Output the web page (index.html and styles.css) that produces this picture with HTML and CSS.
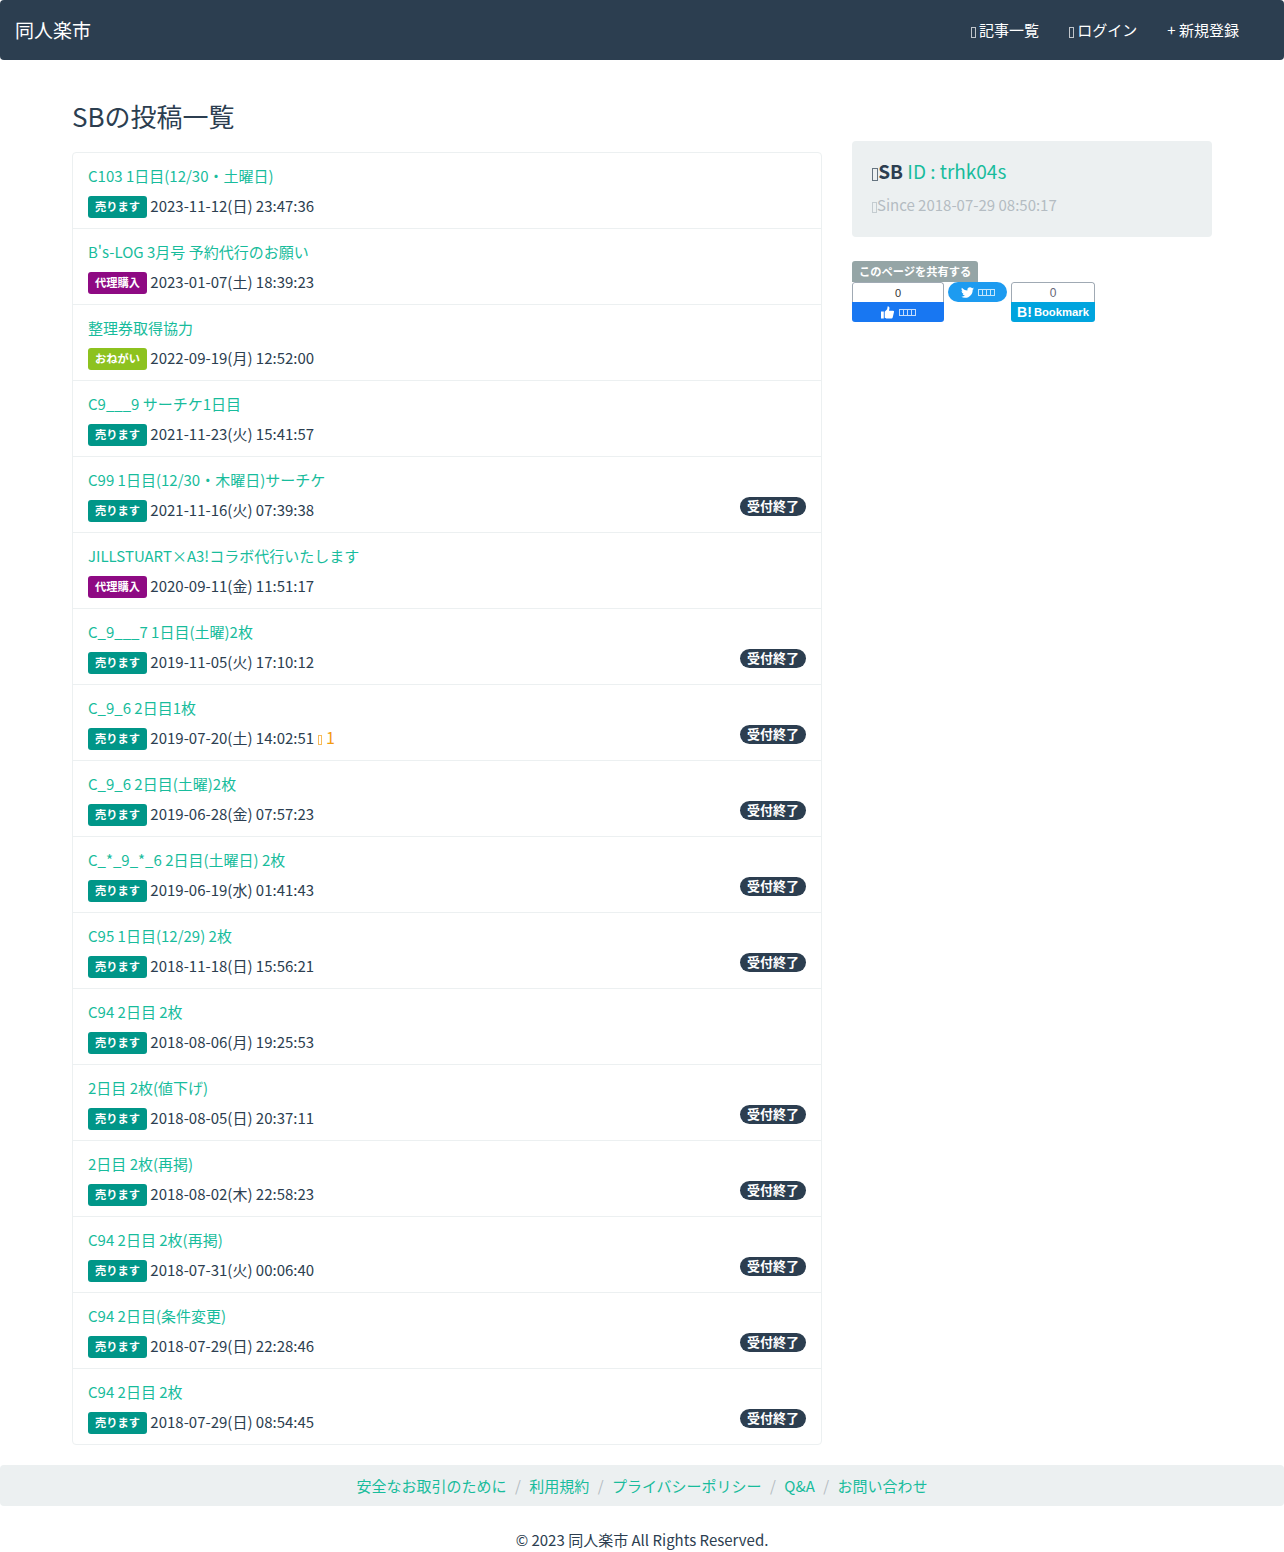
FILE: index.html
```html
<!DOCTYPE html>
<html lang="ja">
<head>
<meta charset="utf-8">
<title>SBの投稿一覧 - 同人楽市</title>
<link rel="stylesheet" href="styles.css">
</head>
<body>
<nav class="navbar">
  <a class="brand" href="#">同人楽市</a>
  <ul class="nav-links">
    <li><a href="#"><i class="tofu"></i> 記事一覧</a></li>
    <li><a href="#"><i class="tofu"></i> ログイン</a></li>
    <li><a href="#">+ 新規登録</a></li>
  </ul>
</nav>
<div class="container">
  <main class="main-col">
    <h3 class="page-title">SBの投稿一覧</h3>
    <div class="list">
      <div class="item"><a class="item-title" href="#">C103 1日目(12/30・土曜日)</a><div class="meta"><div><span class="tag sell">売ります</span> 2023-11-12(日) 23:47:36</div></div></div>
      <div class="item"><a class="item-title" href="#">B's-LOG 3月号 予約代行のお願い</a><div class="meta"><div><span class="tag proxy">代理購入</span> 2023-01-07(土) 18:39:23</div></div></div>
      <div class="item"><a class="item-title" href="#">整理券取得協力</a><div class="meta"><div><span class="tag ask">おねがい</span> 2022-09-19(月) 12:52:00</div></div></div>
      <div class="item"><a class="item-title" href="#">C9___9 サーチケ1日目</a><div class="meta"><div><span class="tag sell">売ります</span> 2021-11-23(火) 15:41:57</div></div></div>
      <div class="item"><a class="item-title" href="#">C99 1日目(12/30・木曜日)サーチケ</a><div class="meta"><div><span class="tag sell">売ります</span> 2021-11-16(火) 07:39:38</div><span class="closed">受付終了</span></div></div>
      <div class="item"><a class="item-title" href="#">JILLSTUART×A3!コラボ代行いたします</a><div class="meta"><div><span class="tag proxy">代理購入</span> 2020-09-11(金) 11:51:17</div></div></div>
      <div class="item"><a class="item-title" href="#">C_9___7 1日目(土曜)2枚</a><div class="meta"><div><span class="tag sell">売ります</span> 2019-11-05(火) 17:10:12</div><span class="closed">受付終了</span></div></div>
      <div class="item"><a class="item-title" href="#">C_9_6 2日目1枚</a><div class="meta"><div><span class="tag sell">売ります</span> 2019-07-20(土) 14:02:51 <span class="comments"><i class="tofu"></i> 1</span></div><span class="closed">受付終了</span></div></div>
      <div class="item"><a class="item-title" href="#">C_9_6 2日目(土曜)2枚</a><div class="meta"><div><span class="tag sell">売ります</span> 2019-06-28(金) 07:57:23</div><span class="closed">受付終了</span></div></div>
      <div class="item"><a class="item-title" href="#">C_*_9_*_6 2日目(土曜日) 2枚</a><div class="meta"><div><span class="tag sell">売ります</span> 2019-06-19(水) 01:41:43</div><span class="closed">受付終了</span></div></div>
      <div class="item"><a class="item-title" href="#">C95 1日目(12/29) 2枚</a><div class="meta"><div><span class="tag sell">売ります</span> 2018-11-18(日) 15:56:21</div><span class="closed">受付終了</span></div></div>
      <div class="item"><a class="item-title" href="#">C94 2日目 2枚</a><div class="meta"><div><span class="tag sell">売ります</span> 2018-08-06(月) 19:25:53</div></div></div>
      <div class="item"><a class="item-title" href="#">2日目 2枚(値下げ)</a><div class="meta"><div><span class="tag sell">売ります</span> 2018-08-05(日) 20:37:11</div><span class="closed">受付終了</span></div></div>
      <div class="item"><a class="item-title" href="#">2日目 2枚(再掲)</a><div class="meta"><div><span class="tag sell">売ります</span> 2018-08-02(木) 22:58:23</div><span class="closed">受付終了</span></div></div>
      <div class="item"><a class="item-title" href="#">C94 2日目 2枚(再掲)</a><div class="meta"><div><span class="tag sell">売ります</span> 2018-07-31(火) 00:06:40</div><span class="closed">受付終了</span></div></div>
      <div class="item"><a class="item-title" href="#">C94 2日目(条件変更)</a><div class="meta"><div><span class="tag sell">売ります</span> 2018-07-29(日) 22:28:46</div><span class="closed">受付終了</span></div></div>
      <div class="item"><a class="item-title" href="#">C94 2日目 2枚</a><div class="meta"><div><span class="tag sell">売ります</span> 2018-07-29(日) 08:54:45</div><span class="closed">受付終了</span></div></div>
    </div>
  </main>
  <aside class="side-col">
    <div class="well">
      <div class="profile-name"><i class="tofu"></i><strong>SB</strong> <a href="#">ID : trhk04s</a></div>
      <div class="since"><i class="tofu"></i>Since 2018-07-29 08:50:17</div>
    </div>
    <div class="share">
      <div class="share-label">このページを共有する</div>
      <div class="share-buttons">
        <a class="fb" href="#">
          <span class="count">0</span>
          <span class="fb-action">
            <svg class="thumb" viewBox="0 0 14 14" width="13" height="13"><path fill="#fff" d="M0 6h3v7.500H0zM4 6.200 6.600 3.400 7.200 0.400c1.500 0 2.200 1.200 1.800 2.700L8.600 5H13c.8 0 1.200.8 1 1.500l-1.400 6c-.2.600-.6 1-1.200 1H5.500C4.600 13.500 4 13 4 12.200z"/></svg>
            <span class="mini-tofu"><i></i><i></i><i></i><i></i></span>
          </span>
        </a>
        <a class="tw" href="#">
          <svg viewBox="0 0 24 24" width="13" height="13"><path fill="#fff" d="M23.950 4.570a10 10 0 0 1-2.820.77 4.960 4.960 0 0 0 2.160-2.720c-.95.550-2 .96-3.130 1.190a4.920 4.920 0 0 0-8.380 4.480C7.690 8.090 4.070 6.130 1.640 3.160a4.820 4.820 0 0 0-.66 2.470c0 1.710.87 3.210 2.190 4.100a4.900 4.900 0 0 1-2.230-.62v.06a4.920 4.920 0 0 0 3.950 4.830 5 5 0 0 1-2.210.08 4.940 4.940 0 0 0 4.600 3.420A9.870 9.870 0 0 1 0 19.540a14 14 0 0 0 7.560 2.210c9.050 0 14-7.500 14-13.980 0-.21 0-.42-.02-.63A9.940 9.940 0 0 0 24 4.590z"/></svg>
          <span class="mini-tofu"><i></i><i></i><i></i><i></i></span>
        </a>
        <a class="hb" href="#">
          <span class="count">0</span>
          <span class="hb-action"><b class="hb-logo">B!</b> Bookmark</span>
        </a>
      </div>
    </div>
  </aside>
</div>
<footer class="footer">
  <ul class="crumbs">
    <li><a href="#">安全なお取引のために</a></li>
    <li><a href="#">利用規約</a></li>
    <li><a href="#">プライバシーポリシー</a></li>
    <li><a href="#">Q&amp;A</a></li>
    <li><a href="#">お問い合わせ</a></li>
  </ul>
  <p class="copy">© 2023 同人楽市 All Rights Reserved.</p>
</footer>
</body>
</html>
```
FILE: styles.css
```css
* { box-sizing: border-box; }
html, body { margin: 0; padding: 0; }
body {
  font-family: "Noto Sans CJK JP", "Noto Sans", sans-serif;
  font-size: 15px;
  line-height: 22px;
  color: #2c3e50;
  background: #fff;
}
a { color: #18bc9c; text-decoration: none; }
ul { list-style: none; margin: 0; padding: 0; }

.tofu {
  display: inline-block;
  width: .33em;
  height: .67em;
  border: 1px solid currentColor;
  opacity: .7;
  vertical-align: -.1em;
}

.navbar {
  height: 60px;
  background: #2c3e50;
  border-radius: 4px;
  display: flex;
  align-items: center;
  justify-content: space-between;
  padding: 0 45px 0 15px;
}
.brand { color: #fff; font-size: 19px; }
.nav-links { display: flex; gap: 30px; }
.nav-links a { color: #fff; }

.container {
  width: 1140px;
  margin: 0 auto;
  display: grid;
  grid-template-columns: 750px 360px;
  column-gap: 30px;
}
.page-title {
  font-size: 26px;
  font-weight: 400;
  line-height: 32px;
  margin: 40px 0 20px;
}
.list {
  border: 1px solid #ecf0f1;
  border-radius: 4px;
}
.item {
  height: 76px;
  padding: 12px 15px 0;
  border-bottom: 1px solid #ecf0f1;
}
.item:last-child { height: 75px; border-bottom: 0; }
.item-title { display: block; line-height: 22px; margin-bottom: 8px; }
.meta { display: flex; justify-content: space-between; align-items: center; height: 22px; }
.tag {
  display: inline-block;
  width: 59px;
  height: 22px;
  line-height: 20px;
  margin-top: 1px;
  border-radius: 3px;
  color: #fff;
  font-size: 11.25px;
  font-weight: 700;
  text-align: center;
  vertical-align: top;
}
.sell { background: #009688; }
.proxy { background: #8e0a83; }
.ask { background: #8dc21f; }
.closed {
  background: #2c3e50;
  color: #fff;
  border-radius: 10px;
  height: 19px;
  line-height: 18px;
  padding: 0 7px;
  font-size: 13px;
  font-weight: 700;
  margin-bottom: 8px;
}
.comments { color: #f39c12; font-size: 16px; line-height: 1; }
.comments .tofu { font-size: 15px; }

.side-col { padding-top: 81px; }
.well {
  background: #ecf0f1;
  border-radius: 4px;
  height: 96px;
  padding: 20px;
}
.profile-name { font-size: 19px; line-height: 20px; margin-bottom: 13px; }
.since { color: #b4bcc2; line-height: 22px; }

.share { margin-top: 24px; }
.share-label {
  width: fit-content;
  background: #95a5a6;
  color: #fff;
  font-size: 11.25px;
  font-weight: 700;
  line-height: 21px;
  height: 21px;
  padding: 0 7px;
  border-radius: 3px 3px 0 0;
}
.share-buttons { display: flex; align-items: flex-start; gap: 4px; font-family: "Liberation Sans", sans-serif; }
.fb, .hb {
  display: flex;
  flex-direction: column;
  height: 40px;
  border-radius: 3px;
  overflow: hidden;
}
.fb { width: 92px; }
.hb { width: 84px; }
.count {
  height: 20px;
  line-height: 20px;
  font-size: 11px;
  text-align: center;
  border: 1px solid #a0aab4;
  border-bottom: 0;
  border-radius: 3px 3px 0 0;
  color: #333;
}
.hb .count { color: #667; font-size: 12px; }
.fb-action, .hb-action {
  height: 20px;
  display: flex;
  align-items: center;
  justify-content: center;
  color: #fff;
}
.fb-action { background: #1877f2; gap: 5px; }
.hb-action { background: #00a4de; font-size: 11.250px; font-weight: 700; gap: 2px; }
.hb-logo { font-size: 14px; }
.tw {
  width: 59px;
  height: 20px;
  background: #1d9bf0;
  border-radius: 10px;
  display: flex;
  align-items: center;
  justify-content: center;
  gap: 4px;
  color: #fff;
}
.mini-tofu { display: flex; }
.mini-tofu i {
  width: 4px;
  height: 7px;
  border: 1px solid #fff;
  border-right-width: 0;
  opacity: .75;
}
.mini-tofu i:last-child { border-right-width: 1px; width: 5px; }

.footer { margin-top: 20px; }
.crumbs {
  height: 41px;
  background: #ecf0f1;
  border-radius: 4px;
  display: flex;
  justify-content: center;
  align-items: center;
}
.crumbs li + li::before { content: "/"; color: #b4bcc2; padding: 0 8.400px; }
.copy { margin: 23px 0 0; text-align: center; }
```
